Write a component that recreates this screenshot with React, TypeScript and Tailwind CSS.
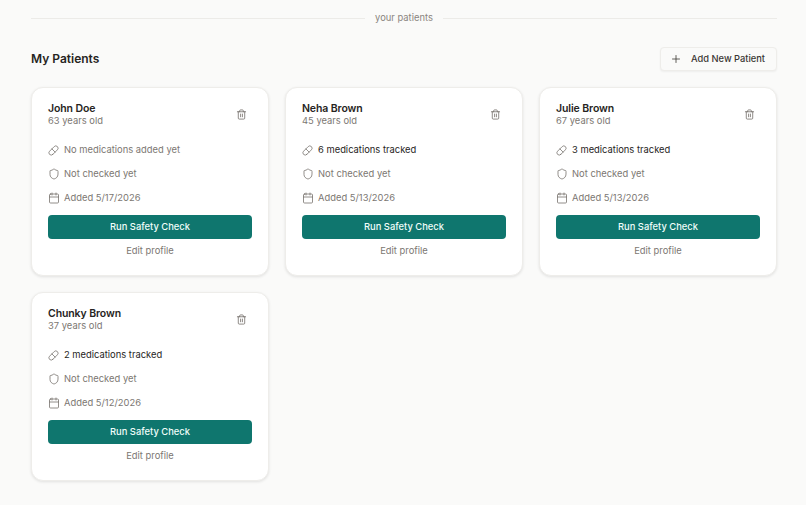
import { Calendar, Pill, Plus, Shield, Trash2 } from "lucide-react";

const patients = [
  { name: "John Doe", age: 63, meds: "No medications added yet", hasMeds: false, added: "5/17/2026" },
  { name: "Neha Brown", age: 45, meds: "6 medications tracked", hasMeds: true, added: "5/13/2026" },
  { name: "Julie Brown", age: 67, meds: "3 medications tracked", hasMeds: true, added: "5/13/2026" },
  { name: "Chunky Brown", age: 37, meds: "2 medications tracked", hasMeds: true, added: "5/12/2026" },
];

function PatientCard({ patient }: { patient: (typeof patients)[number] }) {
  return (
    <div className="flex flex-col rounded-xl border border-[#eeedea] bg-white px-4 pt-[15px] pb-[17px] shadow-[0_1px_3px_rgba(0,0,0,0.1)]">
      <div className="flex items-center justify-between">
        <div>
          <h3 className="text-[10.5px] leading-[12px] font-semibold tracking-[-0.1px] text-[#262422]">{patient.name}</h3>
          <p className="text-[9.4px] leading-[12px] text-[#7c7772]">{patient.age} years old</p>
        </div>
        <button className="mr-[5px] mb-[2px] text-[#6f6a65]">
          <Trash2 className="h-[11px] w-[11px]" strokeWidth={1.7} />
        </button>
      </div>
      <div className="mt-4 flex flex-col gap-[10px] text-[9.4px] leading-[14px] text-[#7c7772]">
        <div className="flex items-center gap-[5px]">
          <Pill className="h-[11px] w-[11px] text-[#77726d]" strokeWidth={1.7} />
          <span className={patient.hasMeds ? "text-[#262422]" : ""}>{patient.meds}</span>
        </div>
        <div className="flex items-center gap-1">
          <Shield className="h-3 w-3 text-[#77726d]" strokeWidth={1.6} />
          <span>Not checked yet</span>
        </div>
        <div className="flex items-center gap-1">
          <Calendar className="h-3 w-3 text-[#77726d]" strokeWidth={1.6} />
          <span>Added {patient.added}</span>
        </div>
      </div>
      <button className="mt-[10px] h-6 rounded-[4px] bg-[#0f766e] text-[9.4px] font-medium text-[#f0fdfa]">
        Run Safety Check
      </button>
      <button className="mt-[5px] text-[9.4px] leading-[14px] text-[#7c7772]">Edit profile</button>
    </div>
  );
}

export default function App() {
  return (
    <div className="min-h-[505px] bg-[#fafaf9] pt-[11px] pr-[29px] pl-[31px] font-['Inter',sans-serif]">
      <div className="flex items-center gap-[10px]">
        <div className="h-px flex-1 bg-[#ecebe8]" />
        <span className="text-[9.4px] leading-[14px] text-[#8a8580]">your patients</span>
        <div className="h-px flex-1 bg-[#ecebe8]" />
      </div>
      <div className="mt-[22px] flex items-center justify-between">
        <h2 className="pb-px text-xs font-semibold text-[#262422]">My Patients</h2>
        <button className="flex h-6 items-center gap-[9px] rounded-[4px] border border-[#eeedea] bg-[#fafaf9] pr-[11px] pl-[9px] text-[9.3px] font-medium text-[#3a3734] shadow-[0_1px_2px_rgba(0,0,0,0.05)]">
          <Plus className="h-3 w-3" strokeWidth={1.6} />
          Add New Patient
        </button>
      </div>
      <div className="mt-4 grid grid-cols-3 gap-4">
        {patients.map((p) => (
          <PatientCard key={p.name} patient={p} />
        ))}
      </div>
    </div>
  );
}
